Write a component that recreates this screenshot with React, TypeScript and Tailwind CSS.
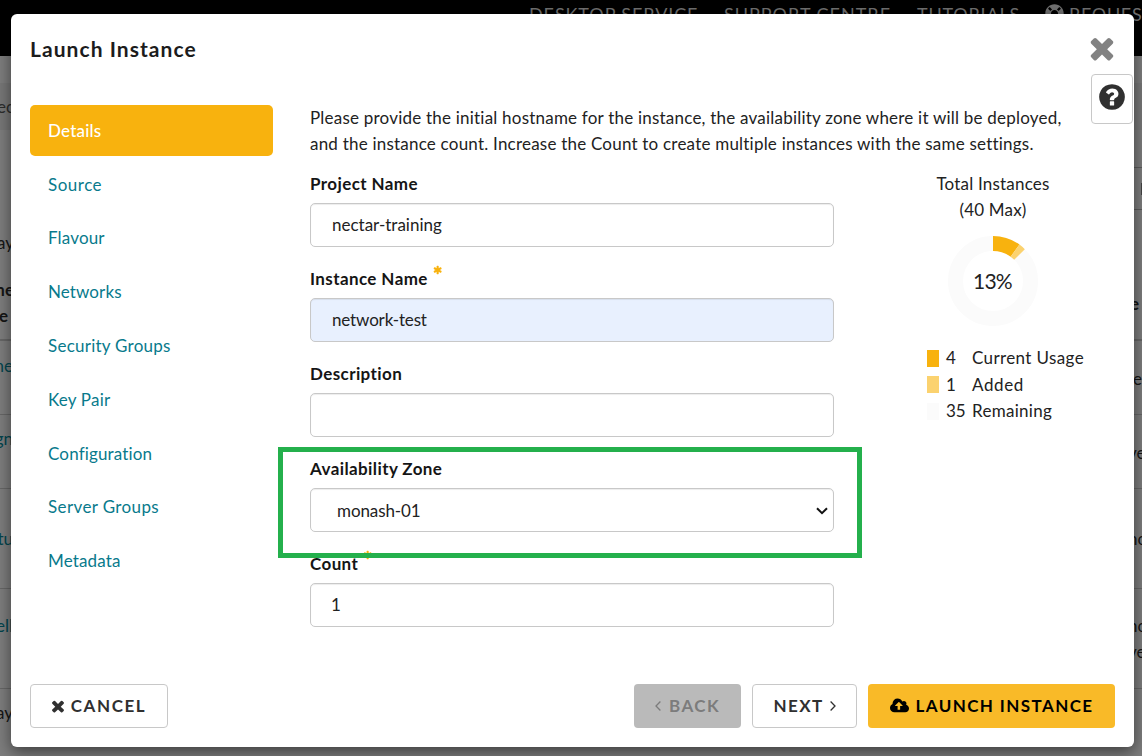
import { FaLifeRing } from "react-icons/fa";

const PATHS = {
  times:
    "M1490 1322q0 40-28 68l-136 136q-28 28-68 28t-68-28l-294-294-294 294q-28 28-68 28t-68-28l-136-136q-28-28-28-68t28-68l294-294-294-294q-28-28-28-68t28-68l136-136q28-28 68-28t68 28l294 294 294-294q28-28 68-28t68 28l136 136q28 28 28 68t-28 68l-294 294 294 294q28 28 28 68z",
  question:
    "M1024 1376v-192q0-14-9-23t-23-9h-192q-14 0-23 9t-9 23v192q0 14 9 23t23 9h192q14 0 23-9t9-23zm256-672q0-88-55.5-163t-138.5-116-170-41q-243 0-371 213-15 24 8 42l132 100q7 6 19 6 16 0 25-12 53-68 86-92 34-24 86-24 48 0 85.5 26t37.5 59q0 38-20 61t-68 45q-63 28-115.5 86.5t-52.5 125.5v36q0 14 9 23t23 9h192q14 0 23-9t9-23q0-19 21.5-49.5t54.5-49.5q32-18 49-28.5t46-35 44.5-48 28-60.5 12.5-81zm384 192q0 209-103 385.5t-279.5 279.5-385.5 103-385.5-103-279.5-279.5-103-385.5 103-385.5 279.5-279.5 385.5-103 385.5 103 279.5 279.5 103 385.5z",
  upload:
    "M1216 864q0-14-9-23l-352-352q-9-9-23-9t-23 9l-351 351q-10 12-10 24 0 14 9 23t23 9h224v352q0 13 9.5 22.5t22.5 9.5h192q13 0 22.5-9.5t9.5-22.5v-352h224q13 0 22.5-9.5t9.5-22.5zm640 288q0 159-112.5 271.5t-271.5 112.5h-1088q-185 0-316.5-131.5t-131.5-316.5q0-130 70-240t188-165q-2-30-2-43 0-212 150-362t362-150q156 0 285.5 87t188.5 231q71-62 166-62 106 0 181 75t75 181q0 76-41 138 130 31 213.5 135.5t83.5 238.5z",
  asterisk:
    "M1482 1050q46 26 59.5 77.5t-12.5 97.5l-64 110q-26 46-77.5 59.5t-97.5-12.5l-266-153v307q0 52-38 90t-90 38h-128q-52 0-90-38t-38-90v-307l-266 153q-46 26-97.5 12.5t-77.5-59.5l-64-110q-26-46-12.5-97.5t59.5-77.5l266-154-266-154q-46-26-59.5-77.5t12.5-97.5l64-110q26-46 77.5-59.5t97.5 12.5l266 153v-307q0-52 38-90t90-38h128q52 0 90 38t38 90v307l266-153q46-26 97.5-12.5t77.5 59.5l64 110q26 46 12.5 97.5t-59.5 77.5l-266 154z",
};

function Icon({ name, className, box = "0 0 1792 1792" }: { name: keyof typeof PATHS; className: string; box?: string }) {
  return (
    <svg viewBox={box} className={className} fill="currentColor" aria-hidden="true">
      <path d={PATHS[name]} />
    </svg>
  );
}

const rows = [
  { h: "h-[74px]", left: "me", right: "e", lp: "pt-[12px] text-[#03444d]", rp: "pt-[25px] pl-[5px]" },
  { h: "h-[74px]", left: "ign", right: "ve", lp: "pt-[11px] text-[#03444d]", rp: "pt-[25px]" },
  { h: "h-[100px]", left: "stu", right: "no", lp: "pt-[37px] text-[#03444d]", rp: "pt-[37px]" },
  { h: "h-[100px]", left: "ell", right: "no", lp: "pt-[24px] text-[#03444d]", rp: "pt-[24px]" },
  { h: "h-[100px]", left: "ay", right: "", lp: "pt-[11px] text-[#151515]", rp: "pt-[11px]" },
];

function Backdrop() {
  return (
    <div className="flex h-[756px] flex-col bg-[#7d7d7d] text-[17px] leading-[26px] text-[#151515]">
      <div className="flex h-[56px] shrink-0 items-start justify-end overflow-hidden bg-black pt-[1px] text-[18px] text-[#707070]">
        <div className="flex shrink-0 whitespace-nowrap">
          <span className="w-[195px] tracking-[0.9px]">DESKTOP SERVICE</span>
          <span className="w-[193px] tracking-[1px]">SUPPORT CENTRE</span>
          <span className="w-[128px] tracking-[0.8px]">TUTORIALS</span>
          <FaLifeRing className="mt-[3px] mr-[5px] h-[19px] w-[19px]" />
          <span className="w-[73px] tracking-[0.7px]">REQUEST</span>
        </div>
      </div>
      <div className="h-[27px] shrink-0" />
      <div className="flex h-[47px] shrink-0 items-center bg-[#777777]">
        <div className="flex w-[14px] justify-end overflow-hidden text-[#2c2c2c]">ec</div>
      </div>
      <div className="flex h-[211px] shrink-0 justify-between border-b-2 border-[#666]">
        <div className="flex w-[14px] flex-col items-end overflow-hidden pt-[100px]">
          <span>ay</span>
          <b className="mt-[21px]">ne</b>
          <b className="mr-[6px]">e</b>
        </div>
        <div className="flex w-[12px] flex-col overflow-hidden pt-[37px]">
          <div className="flex h-[43px] shrink-0 items-center justify-end border-y border-[#5c5c5c]">
            <div className="h-[12px] w-px bg-[#444]" />
          </div>
          <b className="mt-[81px]">e</b>
        </div>
      </div>
      {rows.map((r, i) => (
        <div key={i} className={`flex shrink-0 justify-between border-b border-[#666] ${r.h}`}>
          <div className={`flex w-[13px] justify-end overflow-hidden ${r.lp}`}>{r.left}</div>
          <div className={`flex w-[14px] justify-start overflow-hidden ${r.rp}`}>
            <div>
              {r.right}
              {i === 3 && <div>ve</div>}
            </div>
          </div>
        </div>
      ))}
    </div>
  );
}

const nav = [
  ["Details", "tracking-[0.2px]"],
  ["Source", "tracking-[0.5px]"],
  ["Flavour", "tracking-[0.15px]"],
  ["Networks", "tracking-[0.1px]"],
  ["Security Groups", "tracking-[0.25px]"],
  ["Key Pair", "tracking-[0.2px]"],
  ["Configuration", "tracking-[0.15px]"],
  ["Server Groups", "tracking-[0.38px]"],
  ["Metadata", "tracking-[0.15px]"],
];

function Field({ label, value = "", required = false, fill = "bg-white", select = false, spacing = "" }: { label: string; value?: string; required?: boolean; fill?: string; select?: boolean; spacing?: string }) {
  return (
    <div className="flex h-[95px] flex-col">
      <div className="flex h-[32px] items-start">
        <span className="text-[17px] leading-[26px] font-bold tracking-[0.4px] text-[#151515]">{label}</span>
        {required && <Icon name="asterisk" className="mt-[-1px] ml-[5px] h-[10px] w-[10px] text-[#f8b20e]" />}
      </div>
      <div className={`flex h-[44px] items-center justify-between rounded-[5px] border border-[#c8c8c8] pr-[5px] shadow-[inset_0_1px_1px_rgba(0,0,0,0.075)] ${select ? "pt-[1px] pl-[26px]" : "pl-[21px]"} ${fill}`}>
        <span className={spacing}>{value}</span>
        {select && (
          <svg viewBox="0 0 12 8" className="h-[8px] w-[12px]" fill="none" stroke="#111" strokeWidth="2">
            <path d="M1 1.2 6 6.2 11 1.2" />
          </svg>
        )}
      </div>
    </div>
  );
}

function Quota() {
  return (
    <div className="flex w-[158px] flex-col">
      <div className="text-center leading-[26px] tracking-[0.2px]">
        Total Instances
        <br />
        (40 Max)
      </div>
      <svg viewBox="-45 -45 90 90" className="mt-[13px] h-[90px] w-[90px] self-center" aria-hidden="true">
        <circle r="37.5" fill="none" stroke="#fbfbfb" strokeWidth="15" />
        <path d="M0-45A45 45 0 0 1 26.45-36.41L17.63-24.27A30 30 0 0 0 0-30Z" fill="#f8b20e" />
        <path d="M26.45-36.41A45 45 0 0 1 31.82-31.82L21.21-21.21A30 30 0 0 0 17.63-24.27Z" fill="#fbd26f" />
        <text x="-0.5" y="8" textAnchor="middle" fontSize="21" fill="#222" className="tracking-[-0.8px]">13%</text>
      </svg>
      <div className="mt-[19px] ml-[13px] flex flex-col leading-[26.5px]">
        {[
          ["4", "Current Usage", "bg-[#f8b20e]", "tracking-[0.38px]"],
          ["1", "Added", "bg-[#fbd26f]", "tracking-[0.6px]"],
          ["35", "Remaining", "bg-[#fbfbfb]", "tracking-[0.3px]"],
        ].map(([n, t, c, s]) => (
          <div key={t} className="flex items-center whitespace-nowrap">
            <span className={`h-[17px] w-[12px] shrink-0 ${c}`} />
            <span className="ml-[7px] w-[26px] shrink-0">{n}</span>
            <span className={s}>{t}</span>
          </div>
        ))}
      </div>
    </div>
  );
}

const btn = "flex h-[44px] items-center justify-center rounded-[4px] text-[17px] font-bold whitespace-nowrap";

export default function App() {
  return (
    <div className="relative h-[756px] w-[1142px] overflow-hidden font-[Lato,sans-serif]">
      <Backdrop />
      <div className="absolute top-[14px] left-[11px] flex h-[733px] w-[1123px] flex-col rounded-[6px] bg-white px-[19px] text-[17px] text-[#222] shadow-[0_5px_15px_rgba(0,0,0,0.5)]">
        <div className="flex h-[91px] shrink-0 justify-between">
          <h1 className="pt-[21px] text-[21px] leading-[27px] font-bold tracking-[1.05px] text-[#1c1c1c]">Launch Instance</h1>
          <div className="mr-[-18px] flex w-[42px] flex-col">
            <Icon name="times" className="mt-[17px] ml-[-6px] h-[34px] w-[34px] shrink-0 text-[#828282]" />
            <button className="mt-[9px] flex h-[50px] w-[42px] shrink-0 items-center justify-center rounded-[4px] border border-[#c8c8c8] bg-white pb-[4px]">
              <Icon name="question" className="h-[30px] w-[30px] text-[#303030]" />
            </button>
          </div>
        </div>
        <div className="flex h-[579px] shrink-0">
          <nav className="flex w-[243px] flex-col gap-[2.8px]">
            {nav.map(([n, t], i) => (
              <a key={n} className={`flex h-[51px] shrink-0 items-center rounded-[5px] pl-[18px] ${t} ${i === 0 ? "bg-[#f8b20e] pt-px font-medium text-white" : "text-[#087a8c]"}`}>
                {n}
              </a>
            ))}
          </nav>
          <div className="ml-[37px] flex w-[762px] flex-col">
            <p className="leading-[26px] tracking-[0.215px] whitespace-nowrap">
              Please provide the initial hostname for the instance, the availability zone where it will be deployed,
              <br />
              and the instance count. Increase the Count to create multiple instances with the same settings.
            </p>
            <div className="mt-[14px] flex justify-between">
              <div className="w-[524px]">
                <Field label="Project Name" value="nectar-training" />
                <Field label="Instance Name" value="network-test" required fill="bg-[#e8f0fe]" spacing="tracking-[-0.15px]" />
                <Field label="Description" />
                <Field label="Availability Zone" value="monash-01" select spacing="tracking-[-0.1px]" />
                <Field label="Count" value="1" required spacing="-ml-px" />
              </div>
              <Quota />
            </div>
          </div>
        </div>
        <div className="flex shrink-0">
          <button className={`${btn} w-[138px] border border-[#c8c8c8] pr-[3px] text-[#303030]`}>
            <Icon name="times" className="mr-[4px] h-[18px] w-[18px]" />
            <span className="tracking-[1.6px]">CANCEL</span>
          </button>
          <button className={`${btn} ml-[466px] w-[107px] bg-[#bababa] text-[#7c7c7c]`}>
            <svg viewBox="0 0 6 10" className="mr-[8px] h-[10px] w-[6px]" fill="none" stroke="currentColor" strokeWidth="1.3"><path d="M5.4.5 1 5l4.4 4.5" /></svg>
            <span className="tracking-[1.4px]">BACK</span>
          </button>
          <button className={`${btn} ml-[11px] w-[105px] border border-[#c8c8c8] text-[#303030]`}>
            <span className="tracking-[1.4px]">NEXT</span>
            <svg viewBox="0 0 6 10" className="ml-[6px] h-[10px] w-[6px]" fill="none" stroke="currentColor" strokeWidth="1.3"><path d="M.6.5 5 5 .6 9.5" /></svg>
          </button>
          <button className={`${btn} ml-[11px] w-[247px] bg-[#f9ba28] text-black`}>
            <Icon name="upload" box="-64 0 1920 1792" className="mr-[7px] h-[18px] w-[19px]" />
            <span className="tracking-[1.4px]">LAUNCH INSTANCE</span>
          </button>
        </div>
      </div>
      <div className="pointer-events-none absolute top-[447px] left-[278px] h-[111px] w-[584px] border-[5px] border-[#24b04c]" />
    </div>
  );
}
